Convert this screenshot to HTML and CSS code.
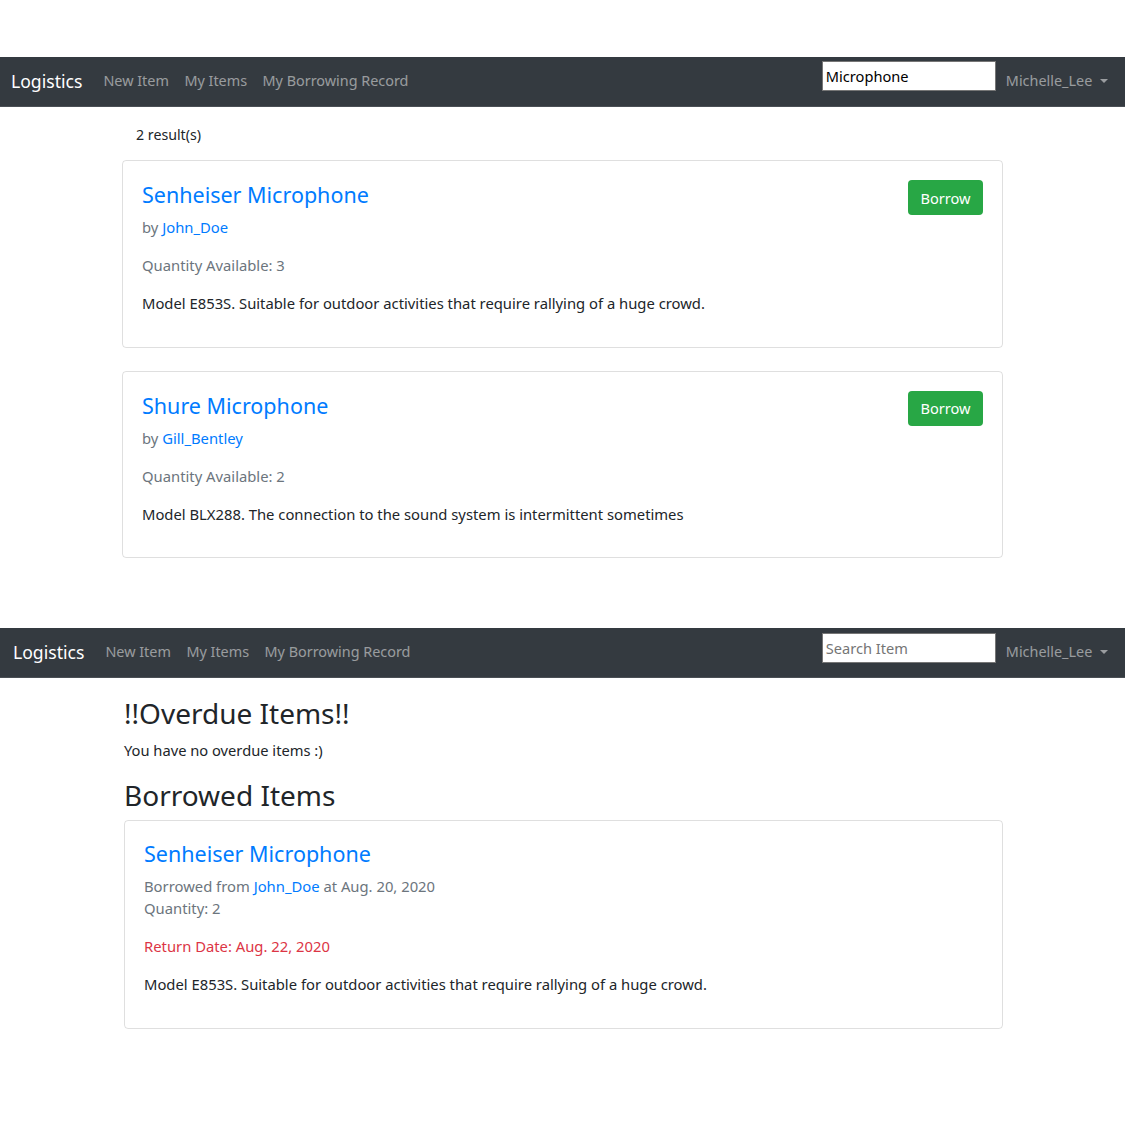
FILE: index.html
```html
<!DOCTYPE html>
<html>
<head>
<meta charset="utf-8">
<link rel="stylesheet" href="styles.css">
</head>
<body>
<div class="shot shot-one">
  <nav class="navbar">
    <a class="brand">Logistics</a>
    <div class="links">
      <a>New Item</a>
      <a>My Items</a>
      <a>My Borrowing Record</a>
    </div>
    <div class="right">
      <div class="search filled">Microphone</div>
      <a class="user">Michelle_Lee <span class="caret"></span></a>
    </div>
  </nav>
  <div class="content one">
    <p class="count">2 result(s)</p>
    <div class="card">
      <div class="card-top">
        <a class="title">Senheiser Microphone</a>
        <button class="borrow">Borrow</button>
      </div>
      <p class="by">by <a>John_Doe</a></p>
      <p class="muted qty">Quantity Available: 3</p>
      <p class="desc">Model E853S. Suitable for outdoor activities that require rallying of a huge crowd.</p>
    </div>
    <div class="card">
      <div class="card-top">
        <a class="title">Shure Microphone</a>
        <button class="borrow">Borrow</button>
      </div>
      <p class="by">by <a>Gill_Bentley</a></p>
      <p class="muted qty">Quantity Available: 2</p>
      <p class="desc">Model BLX288. The connection to the sound system is intermittent sometimes</p>
    </div>
  </div>
</div>
<div class="shot shot-two">
  <nav class="navbar nav-two">
    <a class="brand">Logistics</a>
    <div class="links">
      <a>New Item</a>
      <a>My Items</a>
      <a>My Borrowing Record</a>
    </div>
    <div class="right">
      <div class="search placeholder">Search Item</div>
      <a class="user">Michelle_Lee <span class="caret"></span></a>
    </div>
  </nav>
  <div class="content two">
    <h2 class="heading">!!Overdue Items!!</h2>
    <p class="none">You have no overdue items :)</p>
    <h2 class="heading second">Borrowed Items</h2>
    <div class="card card-b">
      <a class="title">Senheiser Microphone</a>
      <p class="muted from">Borrowed from <a>John_Doe</a> at Aug. 20, 2020</p>
      <p class="muted q2">Quantity: 2</p>
      <p class="return">Return Date: Aug. 22, 2020</p>
      <p class="desc">Model E853S. Suitable for outdoor activities that require rallying of a huge crowd.</p>
    </div>
  </div>
</div>
</body>
</html>
```
FILE: styles.css
```css
* { box-sizing: border-box; }
body {
  margin: 0;
  font-family: "Noto Sans", "Open Sans", sans-serif;
  font-size: 14.8px;
  line-height: 22.5px;
  color: #212529;
  background: #fff;
}
p { margin: 0; }
a { text-decoration: none; }
.shot-one { padding-top: 57px; }
.shot-two { padding-top: 47px; }
.navbar {
  height: 50px;
  background: #343a40;
  display: flex;
  align-items: center;
  padding: 0 17px 0 11px;
  border-bottom: 1px solid #4a4f55;
}
.nav-two { padding-left: 13px; padding-right: 17px; }
.brand {
  color: #fff;
  font-size: 17.6px;
  margin-right: 21px;
}
.links { display: flex; gap: 15.5px; }
.links a, .user {
  color: rgba(255,255,255,.5);
  font-size: 14.4px;
}
.right {
  margin-left: auto;
  display: flex;
  align-items: center;
  gap: 10px;
}
.search {
  width: 174px;
  height: 30px;
  background: #fff;
  border: 1px solid #767676;
  padding: 3px 3px;
  font-size: 14.6px;
  line-height: 22px;
  margin-top: -12px;
}
.nav-two .search { margin-top: -10px; }
.filled { color: #000; }
.placeholder { color: #757575; }
.caret {
  display: inline-block;
  width: 0; height: 0;
  border-left: 4px solid transparent;
  border-right: 4px solid transparent;
  border-top: 4px solid rgba(255,255,255,.5);
  vertical-align: 3px;
  margin-left: 4px;
}
.content { padding: 0 122px 0 122px; }
.count { font-size: 14.2px; padding: 17px 0 0 14px; height: 53px; }
.card {
  border: 1px solid rgba(0,0,0,.125);
  border-radius: 4px;
  padding: 19px 19px 32px 19px;
  margin-bottom: 23px;
}
.card-top { display: flex; justify-content: space-between; align-items: flex-start; height: 30px; }
.title { color: #007bff; font-size: 21.5px; line-height: 30px; display: block; }
.borrow {
  background: #28a745;
  color: #fff;
  border: none;
  border-radius: 4px;
  width: 75px;
  height: 35px;
  font-family: inherit;
  font-size: 14.6px;
  flex-shrink: 0;
}
.by { color: #6c757d; margin-top: 6px; }
.by a, .from a { color: #007bff; }
.muted { color: #6c757d; }
.qty { margin-top: 15.5px; }
.desc { margin-top: 15.5px; }
.content.two { padding-left: 124px; padding-right: 122px; }
.heading { font-size: 28px; font-weight: 400; margin: 0; line-height: 34px; padding-top: 18px; }
.none { margin-top: 9px; font-size: 14.7px; }
.heading.second { padding-top: 16px; margin-bottom: 8px; }
.card-b { padding-top: 18px; padding-bottom: 32px; }
.from { margin-top: 6px; }
.q2 { margin-top: 0; }
.return { color: #dc3545; margin-top: 15.5px; }
```
